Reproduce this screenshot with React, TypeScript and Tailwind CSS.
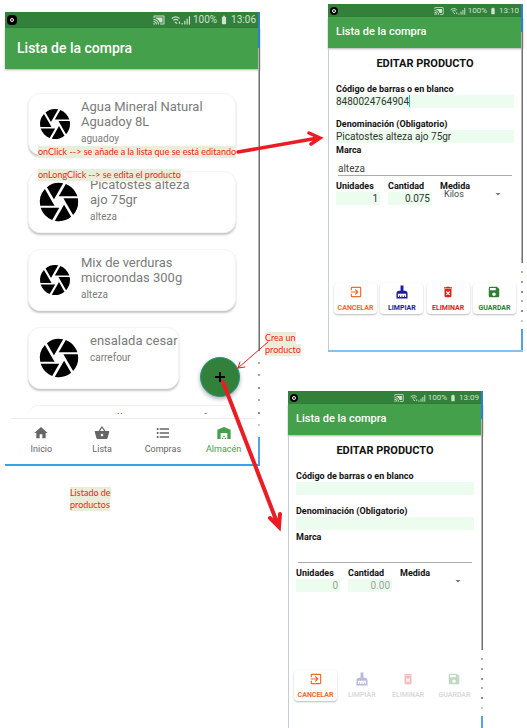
import React, { useId } from "react";
import {
  MdArrowDropDown,
  MdBatteryFull,
  MdCamera,
  MdCastConnected,
  MdDeleteForever,
  MdExitToApp,
  MdFormatListBulleted,
  MdHome,
  MdSave,
  MdShoppingBasket,
  MdWarehouse,
} from "react-icons/md";

function Brush({ className }: { className?: string }) {
  return (
    <svg viewBox="0 0 24 24" className={className} fill="currentColor" aria-hidden="true">
      <path d="M9.500 1h5v9H17c2.500 0 4.500 1.800 4.500 4.500V23h-19v-8.500C2.500 11.800 4.500 10 7 10h2.500V1ZM5 15v5.500h2V18h1.500v2.500h2.700V18h1.600v2.500h2.700V18H17v2.500h2V15H5Z" fillRule="evenodd" />
    </svg>
  );
}

function Signal({ className }: { className?: string }) {
  return (
    <svg viewBox="0 0 26 12" className={className} fill="none" stroke="currentColor" aria-hidden="true">
      <path d="M1 4c3-2.500 7-2.500 10 0M3 6.500c2-1.500 4.500-1.500 6.500 0M5 8.500l3 2" strokeWidth="1.500" />
      <path d="M11 8v3M14.500 10v2M18 7v5M21 4.500v7.500M24 1v11" strokeWidth="1.500" />
    </svg>
  );
}

function StatusBar({ time, large = false }: { time: string; large?: boolean }) {
  return (
    <div
      className={`flex items-center justify-between bg-[#32803a] pl-0.5 pr-1 text-[#cfe3d0] ${
        large ? "h-4 text-[10px]" : "h-[13px] text-[8px]"
      }`}
    >
      <span
        className={`flex items-center justify-center rounded-sm bg-black ${large ? "size-2.5" : "size-2"}`}
      >
        <span className="size-1 rounded-full border border-white" />
      </span>
      <span className="flex items-center gap-0.5 leading-none">
        <MdCastConnected className={large ? "mr-1 size-3" : "mr-1 size-2.5"} />
        <Signal className={large ? "h-2.5 w-5" : "h-2 w-4"} />
        <span>100%</span>
        <MdBatteryFull className={large ? "size-2.5" : "size-2"} />
        <span>{time}</span>
      </span>
    </div>
  );
}

const specks = [
  "bg-[#d9a58a]",
  "bg-[#9aa0b5]",
  "bg-[#7f8fb8]",
  "bg-[#8fb4e0]",
  "bg-[#8a8a98]",
  "bg-[#b9cde6]",
];

function WindowEdge() {
  return (
    <div className="pointer-events-none absolute inset-y-0 right-0 flex w-0.5 flex-col" aria-hidden="true">
      <span className="h-[8%] bg-[#2f7fd0]" />
      <span className="h-[67%] border-l border-[#b5b5b5] bg-[#6f6f6f]" />
      <span className="flex h-[19%] flex-col justify-evenly bg-white">
        {specks.map((c) => (
          <i key={c} className={`h-0.5 ${c}`} />
        ))}
      </span>
      <span className="h-[6%] bg-[#4fa3e6]" />
    </div>
  );
}

type Product = { name: string[]; brand: string; big?: boolean; narrow?: boolean };

const products: Product[] = [
  { name: ["Agua Mineral Natural", "Aguadoy 8L"], brand: "aguadoy" },
  { name: ["Picatostes alteza", "ajo 75gr"], brand: "alteza", big: true },
  { name: ["Mix de verduras", "microondas 300g"], brand: "alteza" },
  { name: ["ensalada cesar"], brand: "carrefour", big: true, narrow: true },
];

function ProductCard({ name, brand, big, narrow }: Product) {
  return (
    <li
      className={`flex h-[62px] gap-2 rounded-xl border border-[#f5f5f5] bg-white pt-[5px] text-[#7b7b7b] shadow-[0_2px_2px_#00000038] ${
        narrow ? "w-[151px]" : "w-[208px]"
      } ${big ? "pl-[7px]" : "pl-2"}`}
    >
      <MdCamera className={big ? "mt-0.5 size-[46px] shrink-0 text-black" : "mt-[7px] size-9 shrink-0 text-black"} />
      <div className="whitespace-nowrap">
        <p className="text-[13px] leading-[15px]">
          {name.map((line) => (
            <span key={line} className="block">
              {line}
            </span>
          ))}
        </p>
        <p className="mt-[3px] text-[10px] leading-[14px]">{brand}</p>
      </div>
    </li>
  );
}

const tabs = [
  { label: "Inicio", Icon: MdHome },
  { label: "Lista", Icon: MdShoppingBasket },
  { label: "Compras", Icon: MdFormatListBulleted },
  { label: "Almacén", Icon: MdWarehouse, active: true },
];

function ListScreen() {
  return (
    <section className="relative border-b-2 border-[#36a3ea] bg-white">
      <StatusBar time="13:06" large />
      <header className="flex h-[41px] items-center bg-[#45a04b] pl-3 text-white shadow-[0_1px_2px_#00000050]">
        <h1 className="text-[14px] font-medium">Lista de la compra</h1>
      </header>
      <div className="h-[345px] overflow-hidden pl-[23px] pt-6">
        <ul className="flex flex-col gap-4">
          {products.map((p) => (
            <ProductCard key={p.name[0]} {...p} />
          ))}
          <li className="h-2.5 w-[208px] overflow-hidden rounded-t-xl border-t border-[#f0f0f0] pl-[62px] text-[13px] leading-[25px] text-[#7b7b7b]">
            Tortillas con avena f
          </li>
        </ul>
      </div>
      <nav className="mx-1.5 mt-1 flex h-[46px] border-t border-[#ececec] pt-1.5">
        {tabs.map(({ label, Icon, active }) => (
          <a
            key={label}
            href="#"
            className={`flex flex-1 flex-col items-center gap-0.5 text-[9px] leading-[12px] ${
              active ? "text-[#45a04b]" : "text-[#666666]"
            }`}
          >
            <Icon className="size-4" />
            {label}
          </a>
        ))}
      </nav>
      <WindowEdge />
      <button
        type="button"
        aria-label="Crear producto"
        className="absolute bottom-[67px] right-5 flex size-10 items-center justify-center rounded-full border border-[#25998a] bg-[#328039] text-black shadow-[0_2px_4px_#00000050]"
      >
        <svg viewBox="0 0 10 10" className="size-2.5" stroke="currentColor" strokeWidth="2" aria-hidden="true">
          <path d="M5 0v10M0 5h10" />
        </svg>
      </button>
    </section>
  );
}

const actions = [
  { label: "CANCELAR", Icon: MdExitToApp, color: "text-[#f26a2a]" },
  { label: "LIMPIAR", Icon: Brush, color: "text-[#1c1c9c]" },
  { label: "ELIMINAR", Icon: MdDeleteForever, color: "text-[#d8261c]" },
  { label: "GUARDAR", Icon: MdSave, color: "text-[#2e8035]" },
];

type FormProps = {
  time: string;
  code?: string;
  name?: string;
  brand?: string;
  units?: string;
  quantity?: string;
  measure?: string;
  filled?: boolean;
};

const labelStyle = "block text-[9px] font-bold leading-[11px] text-[#111111]";
const fieldStyle =
  "block h-[13px] w-full bg-[#ecfcee] p-0 text-[10px] leading-[13px] text-[#333333] outline-none placeholder:text-[#9aa59b]";

function EditScreen({ time, code, name, brand, units, quantity, measure, filled }: FormProps) {
  const id = useId();
  return (
    <section className="relative flex h-[348px] flex-col border-b-2 border-[#7fc4f2] bg-white">
      <StatusBar time={time} />
      <header className="flex h-[31px] shrink-0 items-center bg-[#45a04b] pl-2 text-white shadow-[0_1px_2px_#00000050]">
        <h2 className="text-[11px] font-medium">Lista de la compra</h2>
      </header>
      <form className="flex flex-1 flex-col border-l border-[#c4cdd4] pl-[7px] pr-[9px]">
        <h3 className="mt-2 text-center text-[11px] font-bold leading-4 text-[#111111]">EDITAR PRODUCTO</h3>
        <div className="mt-3">
          <label htmlFor={id + "code"} className={labelStyle}>
            Código de barras o en blanco
          </label>
          <div className="relative">
            <input id={id + "code"} className={fieldStyle} defaultValue={code} />
            {filled && <span className="absolute left-[73px] top-0 h-3 w-px bg-[#1fc4b4]" />}
          </div>
        </div>
        <div className="mt-[11px]">
          <label htmlFor={id + "name"} className={labelStyle}>
            Denominación (Obligatorio)
          </label>
          <input id={id + "name"} className={fieldStyle} defaultValue={name} />
        </div>
        <div className="mt-0.5">
          <label htmlFor={id + "brand"} className={labelStyle}>
            Marca
          </label>
          <div className="px-0.5">
            <input
              id={id + "brand"}
              defaultValue={brand}
              className="block h-5 w-full border-b border-[#ababab] bg-transparent pt-1.5 text-[10px] text-[#444444] outline-none"
            />
          </div>
        </div>
        <div className="mt-[5px] flex gap-2">
          <div className="w-11">
            <label htmlFor={id + "units"} className={labelStyle}>
              Unidades
            </label>
            <input
              id={id + "units"}
              placeholder="0"
              defaultValue={units}
              className={`${fieldStyle} pr-0.5 text-right`}
            />
          </div>
          <div className="w-11">
            <label htmlFor={id + "quantity"} className={labelStyle}>
              Cantidad
            </label>
            <input
              id={id + "quantity"}
              placeholder="0.00"
              defaultValue={quantity}
              className={`${fieldStyle} pr-0.5 text-right`}
            />
          </div>
          <div className="w-16">
            <label htmlFor={id + "measure"} className={labelStyle}>
              Medida
            </label>
            <div className="relative -mt-1">
              <select
                id={id + "measure"}
                defaultValue={measure}
                className="block h-3 w-full appearance-none bg-transparent pl-1 text-[9px] leading-3 text-[#444444] outline-none"
              >
                <option value=""></option>
                <option value="Kilos">Kilos</option>
              </select>
              <MdArrowDropDown className="pointer-events-none absolute right-0 top-0 size-3 text-[#777777]" />
            </div>
          </div>
        </div>
        <div className="-mx-0.5 mb-9 mt-auto flex justify-between">
          {actions.map(({ label, Icon, color }, i) => {
            const enabled = filled || i === 0;
            return (
              <button
                key={label}
                type="button"
                disabled={!enabled}
                className={`flex h-[31px] w-[43px] flex-col items-center justify-center gap-1 rounded-sm text-[7px] font-bold leading-[10px] ${color} ${
                  enabled ? "shadow-[0_1px_2px_#00000045]" : "opacity-30"
                }`}
              >
                <Icon className="size-3.5 shrink-0" />
                <span className={enabled ? "" : "text-[#888888]"}>{label}</span>
              </button>
            );
          })}
        </div>
      </form>
      <WindowEdge />
    </section>
  );
}

function Note({ className, lines }: { className: string; lines: string[] }) {
  return (
    <p className={`absolute whitespace-nowrap font-[Lato,sans-serif] text-[9px] leading-3 text-[#fb1a10] ${className}`}>
      {lines.map((line) => (
        <span key={line} className="block w-fit bg-[#e9eedb]">
          {line}
        </span>
      ))}
    </p>
  );
}

export default function App() {
  return (
    <main className="relative flex h-screen gap-7 overflow-hidden bg-white pl-[5px] font-[Roboto,sans-serif]">
      <div className="w-[255px] shrink-0 pt-3">
        <ListScreen />
      </div>
      <div className="flex w-[235px] shrink-0 flex-col gap-[39px] pt-1">
        <div className="pl-10">
          <EditScreen
            time="13:10"
            code="8480024764904"
            name="Picatostes alteza ajo 75gr"
            brand="alteza"
            units="1"
            quantity="0.075"
            measure="Kilos"
            filled
          />
        </div>
        <div className="pr-10">
          <EditScreen time="13:09" />
        </div>
      </div>

      <Note className="left-[38px] top-[146px]" lines={["onClick --> se añade a la lista que se está editando"]} />
      <Note className="left-[38px] top-[169px]" lines={["onLongClick --> se edita el producto"]} />
      <Note className="left-[265px] top-[332px]" lines={["Crea un", "producto"]} />
      <Note className="left-[70px] top-[487px]" lines={["Listado de", "productos"]} />

      <svg className="pointer-events-none absolute left-0 top-0" width="527" height="728" fill="none" stroke="#ec1c24" strokeLinecap="round" aria-hidden="true">
        <path d="M238 152L318 138M309 133L320 138L311 144" strokeWidth="3.500" />
        <path d="M223 382L278 525M270 518L279 527L280 514" strokeWidth="4" />
        <path d="M268 342L238 368M240 362L238 368L245 367" strokeWidth="1" />
      </svg>
    </main>
  );
}
